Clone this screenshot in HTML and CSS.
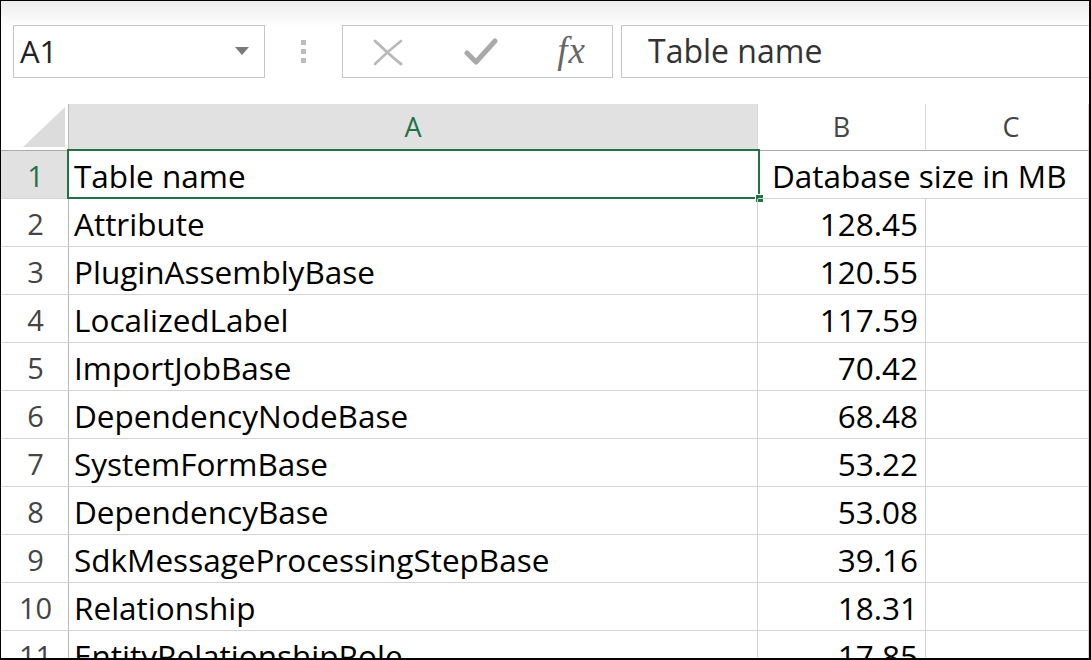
FILE: index.html
```html
<!DOCTYPE html>
<html>
<head>
<meta charset="utf-8">
<link rel="stylesheet" href="styles.css">
</head>
<body>
<div class="frame">
  <div class="toolbar">
    <div class="namebox">
      <span class="ref">A1</span>
      <svg class="dd" width="14" height="8" viewBox="0 0 14 8"><path d="M0 0H14L7 8Z" fill="#7a7a7a"/></svg>
    </div>
    <div class="dots"><i></i><i></i><i></i></div>
    <div class="btns">
      <svg class="ico" width="34" height="30" viewBox="0 0 34 30"><path d="M4 4 C14 13 22 21 30 27" stroke="#b9b9b9" stroke-width="3" fill="none" stroke-linecap="round"/><path d="M30 4 C21 11 12 19 4 27" stroke="#b9b9b9" stroke-width="2.6" fill="none" stroke-linecap="round"/></svg>
      <svg class="ico" width="34" height="30" viewBox="0 0 34 30"><path d="M3 16 L12 25 L31 4" stroke="#a9a9a9" stroke-width="5" fill="none" stroke-linecap="round" stroke-linejoin="round"/></svg>
      <span class="fx">fx</span>
    </div>
    <div class="formula">Table name</div>
  </div>
  <div class="sheet">
    <div class="corner"><svg width="42" height="40" viewBox="0 0 42 40"><path d="M42 0V40H0Z" fill="#dcdcdc"/></svg></div>
    <div class="colh sel">A</div>
    <div class="colh">B</div>
    <div class="colh last">C</div>

    <div class="rowh sel">1</div>
    <div class="cell a1">Table name<div class="selbox"><span class="handle"></span></div></div>
    <div class="cell over">Database size in MB</div>
    <div class="cell"></div>

    <div class="rowh">2</div><div class="cell">Attribute</div><div class="cell num">128.45</div><div class="cell"></div>
    <div class="rowh">3</div><div class="cell">PluginAssemblyBase</div><div class="cell num">120.55</div><div class="cell"></div>
    <div class="rowh">4</div><div class="cell">LocalizedLabel</div><div class="cell num">117.59</div><div class="cell"></div>
    <div class="rowh">5</div><div class="cell">ImportJobBase</div><div class="cell num">70.42</div><div class="cell"></div>
    <div class="rowh">6</div><div class="cell">DependencyNodeBase</div><div class="cell num">68.48</div><div class="cell"></div>
    <div class="rowh">7</div><div class="cell">SystemFormBase</div><div class="cell num">53.22</div><div class="cell"></div>
    <div class="rowh">8</div><div class="cell">DependencyBase</div><div class="cell num">53.08</div><div class="cell"></div>
    <div class="rowh">9</div><div class="cell">SdkMessageProcessingStepBase</div><div class="cell num">39.16</div><div class="cell"></div>
    <div class="rowh">10</div><div class="cell">Relationship</div><div class="cell num">18.31</div><div class="cell"></div>
    <div class="rowh">11</div><div class="cell">EntityRelationshipRole</div><div class="cell num">17.85</div><div class="cell"></div>
  </div>
</div>
</body>
</html>
```
FILE: styles.css
```css
* { box-sizing: border-box; }
html, body { margin: 0; padding: 0; background: #fff; }
.frame {
  width: 1091px; height: 660px; overflow: hidden;
  border-top: 1px solid #000; border-left: 1px solid #000;
  border-right: 2px solid #000; border-bottom: 2px solid #000;
  background: linear-gradient(#ececec 0px, #ffffff 26px);
  font-family: "Open Sans", "Noto Sans", sans-serif;
  position: relative;
}
.toolbar {
  display: flex; align-items: stretch;
  padding: 24px 0 0 12px; height: 103px;
}
.namebox {
  width: 252px; height: 53px;
  border: 1px solid #c6c6c6; background: #fff;
  display: flex; align-items: center; justify-content: space-between;
  padding: 0 15px 2px 6px;
}
.ref { font-size: 31px; color: #222; }
.dots {
  width: 77px; height: 53px;
  display: flex; flex-direction: column; align-items: center; justify-content: center; gap: 4px;
}
.dots i { display: block; width: 5px; height: 5px; background: #bdbdbd; }
.btns {
  width: 271px; height: 53px; border: 1px solid #c6c6c6; background: #fff;
  display: flex; align-items: center; justify-content: space-between;
  padding: 0 26px 0 28px;
}
.fx {
  font-family: "Liberation Serif", serif; font-style: italic;
  font-size: 37px; color: #666; letter-spacing: 1px; margin-top: -3px;
}
.formula {
  margin-left: 8px; flex: 1; margin-right: -10px;
  height: 53px; border: 1px solid #c6c6c6; background: #fff;
  font-size: 32px; color: #333;
  display: flex; align-items: center; padding: 0 0 3px 26px;
}
.sheet {
  display: grid;
  grid-template-columns: 68px 689px 168px 1fr;
  grid-template-rows: 47px;
  grid-auto-rows: 48px;
  background: #fff;
}
.corner {
  border-right: 1px solid #b8b8b8; border-bottom: 1px solid #ababab;
  display: flex; align-items: flex-end; justify-content: flex-end;
  padding: 0 3px 3px 0;
}
.colh {
  border-right: 1px solid #d8d8d8; border-bottom: 1px solid #ababab;
  display: flex; align-items: center; justify-content: center;
  font-size: 27px; color: #444; padding-bottom: 2px;
}
.colh.sel { background: #e1e1e1; color: #217346; }
.colh.last { padding-left: 8px; }
.rowh {
  border-right: 1px solid #b8b8b8; border-bottom: 1px solid #d4d4d4;
  display: flex; align-items: center; justify-content: center;
  font-size: 29px; color: #444; padding: 1px 0 0 2px;
}
.rowh.sel { background: #e1e1e1; color: #217346; }
.cell {
  border-right: 1px solid #d4d4d4; border-bottom: 1px solid #d4d4d4;
  display: flex; align-items: center;
  font-size: 31.5px; color: #000; padding: 2px 0 0 5px;
  white-space: nowrap; position: relative;
}
.cell.num { justify-content: flex-end; padding-right: 7px; }
.cell.over { border-right: none; overflow: visible; padding-left: 14px; }
.a1 { border-right: none; }
.selbox {
  position: absolute; left: -2px; top: -2px; right: -2px; bottom: -1px;
  border: 2px solid #217346;
}
.handle {
  position: absolute; right: -6px; bottom: -6px;
  width: 9px; height: 9px; background: #217346; border: 1px solid #fff;
}
```
